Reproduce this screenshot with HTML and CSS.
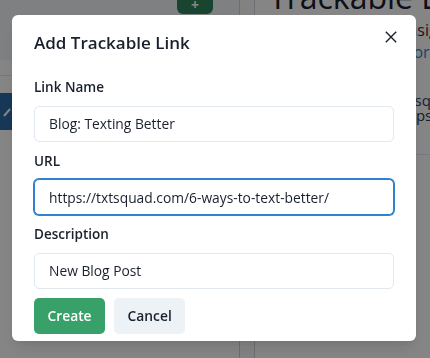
FILE: index.html
```html
<html>
    <head>
        <title>Trackable Links</title>
        <link rel="stylesheet" href="styles.css">
    </head>
    <body>
        <div class="app">
            <div class="side">
                <div class="topbar">
                    <div class="new-btn"><span class="plus">+</span></div>
                </div>
                <div class="subbar"></div>
                <div class="nav-item">
                    <svg class="nav-icon" viewBox="0 0 12 12" width="12" height="12">
                        <path d="M2 10 L8 3" stroke="#fff" stroke-width="2" fill="none"></path>
                    </svg>
                </div>
            </div>
            <div class="gutter"></div>
            <div class="main">
                <h1 class="page-title">Trackable Links</h1>
                <p class="intro">Share links to see <span class="warn">insights</span><br>your texts. <span class="more">Learn more</span></p>
                <div class="link-row">
                    <span class="link-host">txtsquad.com</span><br>https://txtsquad.com
                </div>
            </div>
        </div>

        <div class="overlay">
            <div class="modal">
                <div class="modal-header">
                    <h2 class="modal-title">Add Trackable Link</h2>
                    <button class="close-btn" aria-label="Close">
                        <svg viewBox="0 0 12 12" width="12" height="12">
                            <path d="M0.8 0.8 L11.2 11.2 M11.2 0.8 L0.8 11.2" stroke="currentColor" stroke-width="1.4" fill="none"></path>
                        </svg>
                    </button>
                </div>
                <form class="modal-body">
                    <div class="field">
                        <label>Link Name</label>
                        <input type="text" value="Blog: Texting Better">
                    </div>
                    <div class="field">
                        <label>URL</label>
                        <input type="text" class="focused" value="https://txtsquad.com/6-ways-to-text-better/">
                    </div>
                    <div class="field">
                        <label>Description</label>
                        <input type="text" value="New Blog Post">
                    </div>
                    <div class="actions">
                        <button type="button" class="btn btn-green">Create</button>
                        <button type="button" class="btn btn-gray">Cancel</button>
                    </div>
                </form>
            </div>
        </div>
    </body>
</html>
```

FILE: styles.css
```css
html, body {
    margin: 0;
    padding: 0;
    height: 100%;
}
body {
    font-family: "Open Sans", "Noto Sans", sans-serif;
    color: #1a202c;
    background: #fff;
    overflow: hidden;
}

/* page behind the modal */
.app {
    display: grid;
    grid-template-columns: 240px 15px 1fr;
    height: 100%;
}
.side {
    border-right: 1px solid #d0d5dc;
    background: #fff;
}
.topbar {
    height: 60px;
    background: #f3f5f8;
}
.new-btn {
    width: 36px;
    height: 14px;
    margin-left: 177px;
    border-radius: 0 0 6px 6px;
    background: #2f855a;
    color: #fff;
    text-align: center;
    overflow: hidden;
}
.plus {
    display: block;
    font-size: 14px;
    line-height: 10px;
    font-weight: 700;
}
.subbar {
    height: 15px;
    border-bottom: 1px solid #e2e8f0;
}
.nav-item {
    margin-top: 17px;
    height: 37px;
    width: 200px;
    background: #2c6aa8;
    display: flex;
    align-items: center;
    padding-left: 2px;
}
.gutter {
    border-right: 1px solid #d0d5dc;
    background: #fafafa;
}
.main {
    padding-left: 14px;
    white-space: nowrap;
    overflow: hidden;
}
.page-title {
    margin: -24px 0 0;
    font-size: 32px;
    font-weight: 400;
    line-height: 41px;
}
.intro {
    margin: 2px 0 0;
    font-size: 16px;
    line-height: 22px;
    color: #2d3748;
}
.warn {
    color: #63171b;
}
.more {
    color: #3182ce;
}
.link-row {
    margin-top: 30px;
    padding: 0 0 31px 127px;
    font-size: 15px;
    line-height: 15px;
    color: #2d3748;
    border-bottom: 1px solid #e2e8f0;
}
.link-host {
    color: #2a4365;
}

/* modal */
.overlay {
    position: fixed;
    top: 0;
    left: 0;
    right: 0;
    bottom: 0;
    background: rgba(0, 0, 0, 0.48);
    display: flex;
    align-items: flex-start;
    padding: 15px 0 0 12px;
}
.modal {
    position: relative;
    width: 404px;
    background: #fff;
    border-radius: 6px;
    box-shadow: 0 10px 15px -3px rgba(0,0,0,0.1), 0 4px 6px -2px rgba(0,0,0,0.05);
}
.modal-header {
    padding: 14px 22px;
}
.modal-title {
    margin: 0;
    font-size: 17px;
    font-weight: 600;
    line-height: 27px;
}
.close-btn {
    position: absolute;
    top: 7px;
    right: 11px;
    width: 29px;
    height: 29px;
    border: none;
    background: transparent;
    color: #1a202c;
    display: flex;
    align-items: center;
    justify-content: center;
    padding: 0;
}
.modal-body {
    margin: 0;
    padding: 7px 22px 7px;
    display: flex;
    flex-direction: column;
    gap: 9px;
}
.field {
    display: flex;
    flex-direction: column;
}
label {
    font-size: 13.5px;
    font-weight: 600;
    line-height: 21.6px;
    margin-bottom: 7px;
}
input[type=text] {
    height: 36px;
    padding: 0 14px;
    font-family: inherit;
    font-size: 13.8px;
    color: #1a202c;
    border: 1px solid #e2e8f0;
    border-radius: 5px;
    box-sizing: border-box;
    outline: none;
}
input.focused {
    border-color: #3182ce;
    box-shadow: 0 0 0 1px #3182ce;
}
.actions {
    display: flex;
    gap: 9px;
}
.btn {
    height: 36px;
    padding: 0 13.5px;
    border: none;
    border-radius: 5px;
    font-family: inherit;
    font-size: 13.8px;
    font-weight: 600;
}
.btn-green {
    background: #38a169;
    color: #fff;
}
.btn-gray {
    background: #edf2f7;
    color: #1a202c;
}
```
